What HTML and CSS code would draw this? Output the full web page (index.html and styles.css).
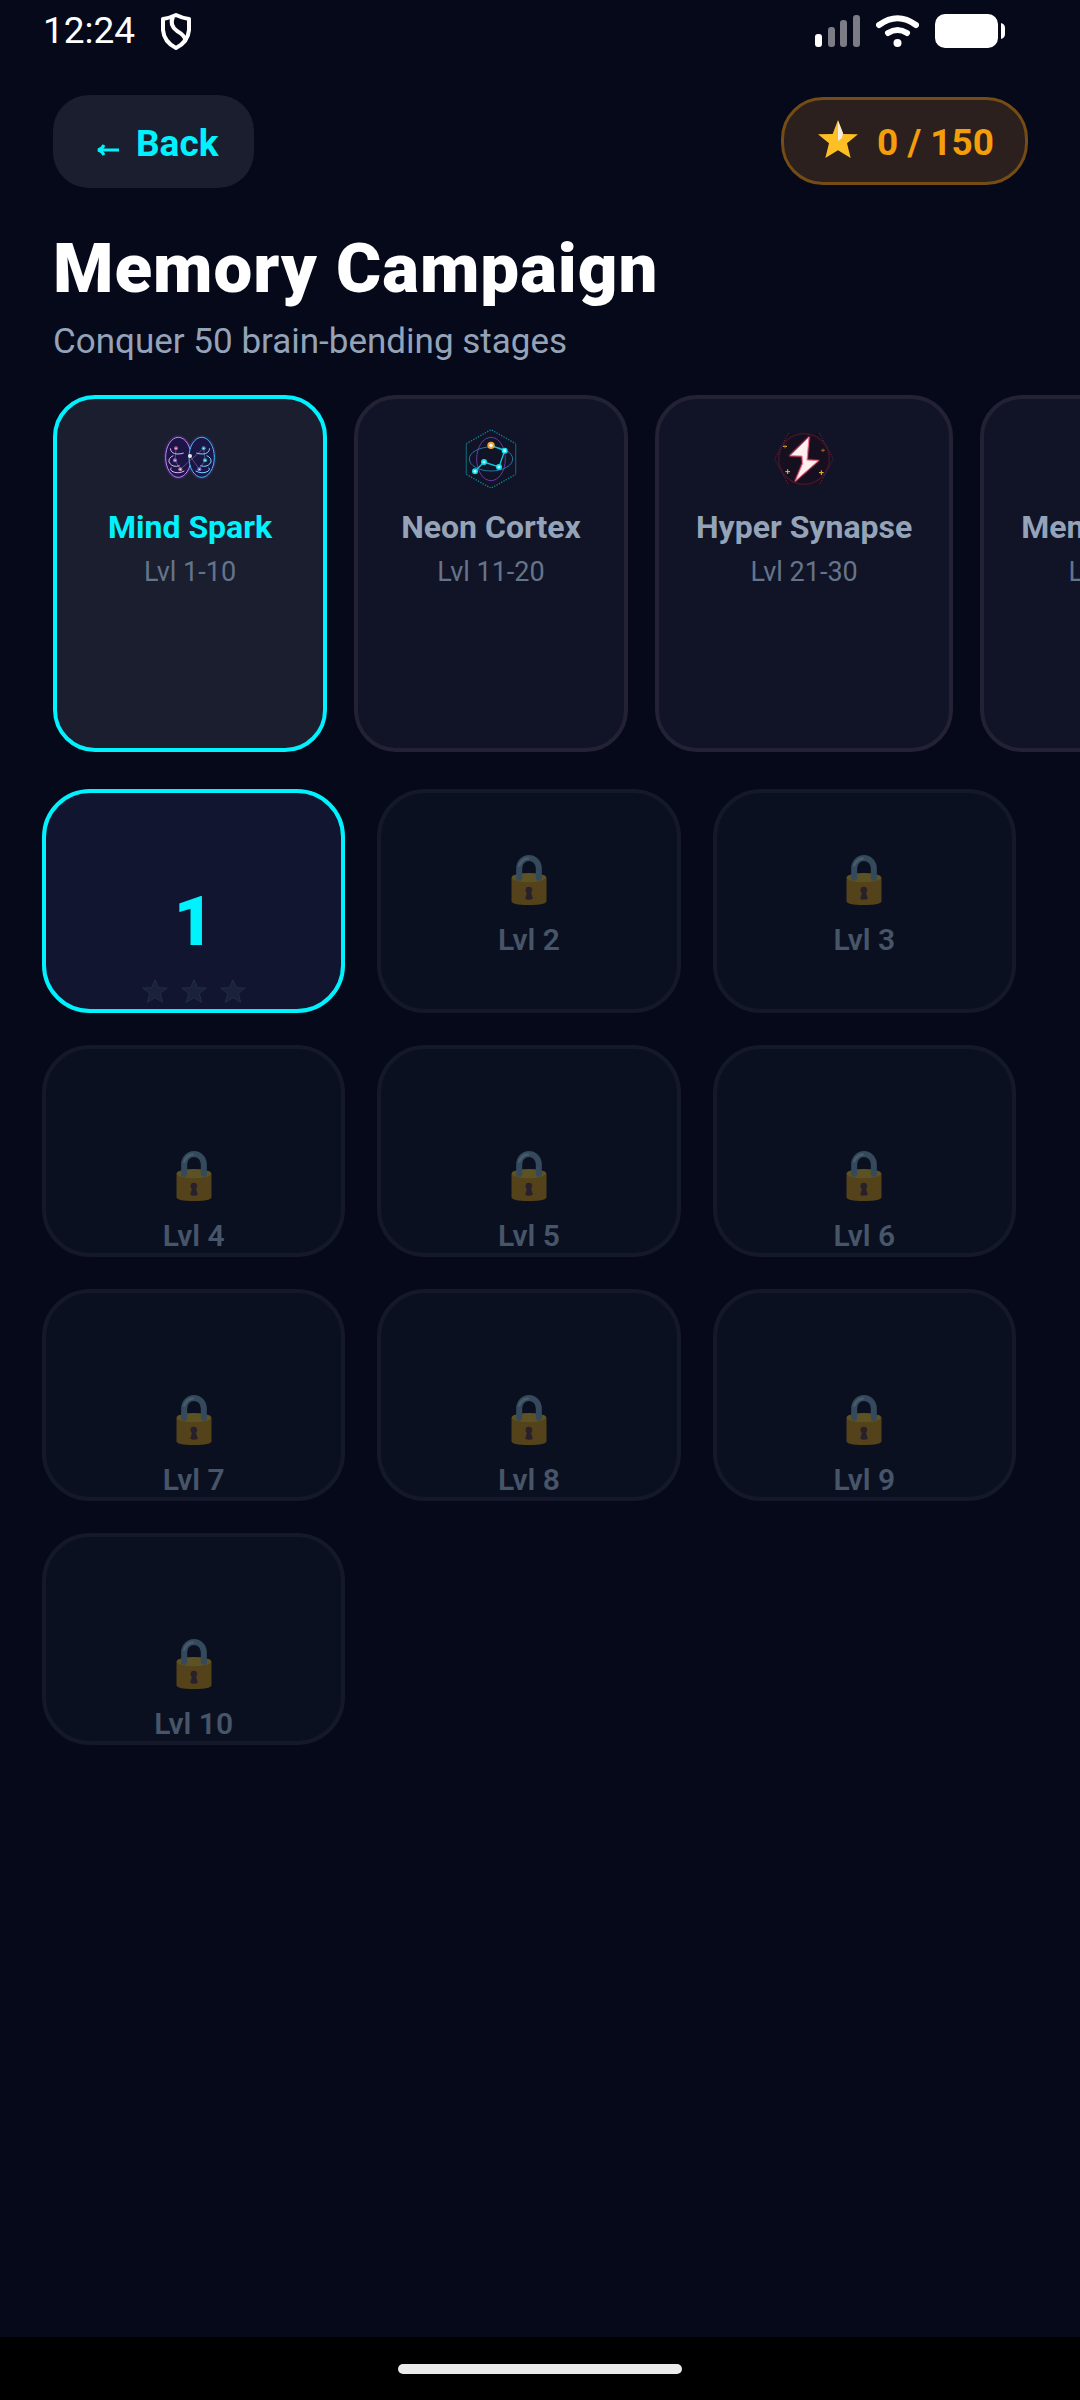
FILE: index.html
```html
<!DOCTYPE html>
<html lang="en">
<head>
    <meta charset="UTF-8">
    <meta name="viewport" content="width=device-width, initial-scale=1.0">
    <title>Memory Campaign</title>
    <link rel="stylesheet" href="styles.css">
</head>
<body>

    <!-- shared shapes -->
    <svg class="sprite" aria-hidden="true">
        <symbol id="lock" viewBox="0 0 107 150">
            <path d="M1 70 Q1 62 10 60 H97 Q106 62 106 70 V138 Q106 150 53 150 Q1 150 1 138 Z" fill="#54421b"/>
            <ellipse cx="53" cy="68" rx="51" ry="14" fill="#5c5224"/>
            <path d="M24 68 V40 A29.5 31 0 0 1 83 40 V68" fill="none" stroke="#34495b" stroke-width="18" stroke-linecap="round"/>
            <path d="M24 32 Q31 12 50 10" fill="none" stroke="#465d6c" stroke-width="7" stroke-linecap="round"/>
            <circle cx="53" cy="105" r="10" fill="#28202a"/>
            <path d="M49 108 H58 L65 131 Q53 137 42 131 Z" fill="#28202a"/>
        </symbol>
        <symbol id="star" viewBox="0 0 78 72">
            <path d="M39 2 L49 26 L76 27 L55 43 L62 70 L39 56 L16 70 L23 43 L2 27 L29 26 Z"/>
        </symbol>
    </svg>

    <header class="status-bar">
        <div class="status-left">
            <span>12:24</span>
            <svg width="32" height="38" viewBox="0 0 32 38" fill="none" stroke="#fff" stroke-width="4" stroke-linejoin="round">
                <path d="M16 3 Q22 6 29 7 V18 Q28 30 16 36 Q4 30 3 18 V7 Q10 6 16 3 Z"/>
                <path d="M13 5 Q9 13 17 19 Q26 24 25 29"/>
            </svg>
        </div>
        <div class="status-right">
            <svg width="45" height="32" viewBox="0 0 45 32">
                <rect x="0" y="19" width="7" height="13" rx="3" fill="#fff"/>
                <rect x="13" y="12" width="7" height="20" rx="3" fill="#7c7c87"/>
                <rect x="25" y="5" width="7" height="27" rx="3" fill="#7c7c87"/>
                <rect x="38" y="0" width="7" height="32" rx="3" fill="#7c7c87"/>
            </svg>
            <svg width="43" height="32" viewBox="0 0 43 32" fill="none" stroke="#fff" stroke-width="6" stroke-linecap="round">
                <path d="M3 10 Q21.500 -3.500 40 10"/>
                <path d="M12 18 Q21.500 12 31 18"/>
                <circle cx="21.500" cy="28" r="4" fill="#fff" stroke="none"/>
            </svg>
            <svg width="70" height="34" viewBox="0 0 70 34" fill="#fff">
                <rect width="63" height="34" rx="10"/>
                <path d="M66 9 Q70 10 70 14 V20 Q70 24 66 25 Z"/>
            </svg>
        </div>
    </header>

    <main>
        <div class="top-bar">
            <button class="back">
                <svg width="24" height="12" viewBox="0 0 24 12" fill="none" stroke="#00f2ff" stroke-width="3" aria-hidden="true">
                    <path d="M23 6 H3"/>
                    <path d="M8 1 Q6 5 2 6 Q6 7 8 11"/>
                </svg>
                Back
            </button>
            <div class="star-count">
                <svg width="40" height="38" viewBox="0 0 120 114">
                    <path d="M60 0 L76 42 L120 43 L87 70 L98 114 L60 91 L22 114 L33 70 L0 43 L44 42 Z" fill="#fdbf24"/>
                    <path d="M60 3 L75 40 L72 54 L60 63 Z" fill="#f3eee3"/>
                </svg>
                <span>0 / 150</span>
            </div>
        </div>

        <h1>Memory Campaign</h1>
        <p class="subtitle">Conquer 50 brain-bending stages</p>

        <nav class="stages">
            <button class="stage active">
                <svg width="60" height="60" viewBox="63 39 180 180" fill="none">
                    <ellipse cx="118" cy="127" rx="39" ry="61" stroke="#6d3aa3" stroke-width="10" opacity="0.3"/>
                    <ellipse cx="188" cy="127" rx="39" ry="61" stroke="#5a3aa3" stroke-width="10" opacity="0.3"/>
                    <ellipse cx="118" cy="127" rx="38" ry="60" fill="#1c1546" stroke="#c084fc" stroke-width="3"/>
                    <ellipse cx="188" cy="127" rx="38" ry="60" fill="#1a1747" stroke="#38bdf8" stroke-width="3"/>
                    <g stroke="#d8b4fe" stroke-width="3">
                        <path d="M94 100 Q96 116 114 117 Q128 117 134 114"/>
                        <path d="M103 122 Q88 128 90 141 Q96 154 112 154 L122 152"/>
                        <path d="M97 158 Q91 162 99 169 Q117 178 136 168"/>
                    </g>
                    <g stroke="#7dd3fc" stroke-width="3">
                        <path d="M212 100 Q210 116 192 117 Q178 117 172 114"/>
                        <path d="M203 122 Q218 128 216 141 Q210 154 194 154 L184 152"/>
                        <path d="M209 158 Q215 162 207 169 Q189 178 170 168"/>
                    </g>
                    <path d="M111 100 L108 136 L124 163 L194 100 L198 136 L181 163 L153 123" stroke="#a6a3b5" stroke-width="2" opacity="0.6"/>
                    <circle cx="111" cy="100" r="6" fill="#c4578d"/>
                    <circle cx="108" cy="136" r="6" fill="#a062d0"/>
                    <circle cx="124" cy="163" r="6" fill="#c47890"/>
                    <circle cx="153" cy="123" r="6" fill="#e8e6ea"/>
                    <circle cx="194" cy="100" r="6" fill="#3c9fce"/>
                    <circle cx="198" cy="136" r="6" fill="#21bcc5"/>
                    <circle cx="181" cy="163" r="6" fill="#7776d8"/>
                    <g fill="#fff">
                        <circle cx="111" cy="100" r="2"/>
                        <circle cx="108" cy="136" r="2"/>
                        <circle cx="124" cy="163" r="2"/>
                        <circle cx="194" cy="100" r="2"/>
                        <circle cx="198" cy="136" r="2"/>
                        <circle cx="181" cy="163" r="2"/>
                    </g>
                </svg>
                <span class="stage-name">Mind Spark</span>
                <span class="stage-range">Lvl 1-10</span>
            </button>

            <button class="stage">
                <svg width="60" height="60" viewBox="66 39 180 180" fill="none">
                    <path d="M82 88 V176 M230 88 V176" stroke="#0d5665" stroke-width="4"/>
                    <path d="M82 86 L156 44 L230 86 M82 178 L156 220 L230 178" stroke="#138292" stroke-width="4" stroke-dasharray="4 4"/>
                    <ellipse cx="156" cy="132" rx="43" ry="65" stroke="#6739a4" stroke-width="3"/>
                    <ellipse cx="156" cy="132" rx="65" ry="36" stroke="#2674a7" stroke-width="3"/>
                    <path d="M156 91 L197 107 L180 156 L135 141 L108 169" stroke="#06cfe0" stroke-width="4"/>
                    <circle cx="156" cy="91" r="11" fill="#f5a33a"/>
                    <circle cx="156" cy="91" r="5" fill="#fff"/>
                    <g fill="#12e0ee">
                        <circle cx="197" cy="107" r="9"/>
                        <circle cx="180" cy="156" r="9"/>
                        <circle cx="135" cy="141" r="9"/>
                        <circle cx="108" cy="169" r="9"/>
                    </g>
                    <g fill="#c4fbff">
                        <circle cx="197" cy="107" r="5"/>
                        <circle cx="180" cy="156" r="4"/>
                        <circle cx="135" cy="141" r="4"/>
                        <circle cx="108" cy="169" r="4"/>
                    </g>
                </svg>
                <span class="stage-name">Neon Cortex</span>
                <span class="stage-range">Lvl 11-20</span>
            </button>

            <button class="stage">
                <svg width="60" height="60" viewBox="60 39 180 180" fill="none">
                    <path d="M104 54 H196 L238 132 L196 210 H104 L62 132 Z" fill="#180d1e" opacity="0.7"/>
                    <path d="M104 54 L62 132 L104 210 M196 54 L238 132 L196 210" stroke="#8c2640" stroke-width="3" stroke-dasharray="3 5"/>
                    <circle cx="150" cy="132" r="76" stroke="#3b1629" stroke-width="5"/>
                    <path d="M165 66 L108 122 L144 123 L146 145 L124 198 L193 137 L159 135 Z" fill="#fff1f2" stroke="#6b1c34" stroke-width="9" stroke-linejoin="round"/>
                    <path d="M165 66 L108 122 L144 123 L146 145 L124 198 L193 137 L159 135 Z" fill="#fff1f2" stroke="#f0788c" stroke-width="3"/>
                    <path d="M94 170 H108 M101 163 V177 M195 173 H209 M202 166 V180 M87 94 H99" stroke="#fbbf24" stroke-width="3"/>
                    <path d="M201 106 H213 M207 101 V111 M93 90 V100" stroke="#946a20" stroke-width="3"/>
                </svg>
                <span class="stage-name">Hyper Synapse</span>
                <span class="stage-range">Lvl 21-30</span>
            </button>

            <button class="stage">
                <svg width="60" height="60" viewBox="0 0 180 180" fill="none">
                    <circle cx="90" cy="90" r="70" stroke="#6739a4" stroke-width="4"/>
                    <circle cx="90" cy="90" r="36" stroke="#2674a7" stroke-width="4"/>
                </svg>
                <span class="stage-name">Memory Vault</span>
                <span class="stage-range">Lvl 31-40</span>
            </button>
        </nav>

        <section class="levels">
            <button class="level current">
                <span class="number">1</span>
                <span class="stars">
                    <svg><use href="#star"/></svg>
                    <svg><use href="#star"/></svg>
                    <svg><use href="#star"/></svg>
                </span>
            </button>
            <button class="level first-row" disabled><svg class="lock"><use href="#lock"/></svg>Lvl 2</button>
            <button class="level first-row" disabled><svg class="lock"><use href="#lock"/></svg>Lvl 3</button>
            <button class="level" disabled><svg class="lock"><use href="#lock"/></svg>Lvl 4</button>
            <button class="level" disabled><svg class="lock"><use href="#lock"/></svg>Lvl 5</button>
            <button class="level" disabled><svg class="lock"><use href="#lock"/></svg>Lvl 6</button>
            <button class="level" disabled><svg class="lock"><use href="#lock"/></svg>Lvl 7</button>
            <button class="level" disabled><svg class="lock"><use href="#lock"/></svg>Lvl 8</button>
            <button class="level" disabled><svg class="lock"><use href="#lock"/></svg>Lvl 9</button>
            <button class="level" disabled><svg class="lock"><use href="#lock"/></svg>Lvl 10</button>
        </section>
    </main>

    <footer class="home-bar">
        <div class="home-pill"></div>
    </footer>

</body>
</html>
```
FILE: styles.css
```css
* {
    box-sizing: border-box;
}

body {
    font-family: Roboto, "Liberation Sans", sans-serif;
    background-color: #05091a;
    color: #fff;
    margin: 0;
    min-height: 100vh;
    display: flex;
    flex-direction: column;
    overflow-x: hidden;
}

button {
    font-family: inherit;
    margin: 0;
    cursor: pointer;
}

svg {
    flex-shrink: 0;
}

.sprite {
    position: absolute;
    width: 0;
    height: 0;
}

/* status bar */
.status-bar {
    display: flex;
    justify-content: space-between;
    align-items: center;
    height: 60px;
    padding: 2px 75px 0 43px;
    font-size: 37px;
    line-height: 44px;
}

.status-left {
    display: flex;
    align-items: center;
    gap: 25px;
}

.status-right {
    display: flex;
    align-items: center;
    gap: 16px;
}

main {
    flex: 1;
}

/* back button and star counter */
.top-bar {
    display: flex;
    justify-content: space-between;
    align-items: flex-start;
    padding: 35px 52px 0 53px;
}

.back {
    display: flex;
    align-items: center;
    gap: 16px;
    height: 93px;
    padding: 3px 36px 0 43px;
    border: none;
    border-radius: 36px;
    background-color: #1b1e2f;
    color: #00f2ff;
    font-size: 37px;
    font-weight: bold;
}

.back svg {
    margin-top: 14px;
}

.star-count {
    display: flex;
    align-items: center;
    gap: 19px;
    height: 88px;
    margin-top: 2px;
    padding: 0 31px 0 34px;
    border: 3px solid #754c14;
    border-radius: 42px;
    background-color: #2b201e;
    color: #f59e0b;
    font-size: 37px;
    font-weight: bold;
}

.star-count svg {
    margin-bottom: 4px;
}

.star-count span {
    padding-top: 2px;
}

h1 {
    margin: 41px 53px 0;
    font-size: 69px;
    line-height: 80px;
    font-weight: 900;
    letter-spacing: 1px;
}

.subtitle {
    margin: 12px 53px 0;
    color: #94a3b8;
    font-size: 35px;
    line-height: 42px;
}

/* stage picker, scrolls sideways */
.stages {
    display: flex;
    gap: 27px;
    margin-top: 32px;
    padding: 0 53px;
    overflow-x: auto;
    scrollbar-width: none;
}

.stage {
    display: flex;
    flex-direction: column;
    align-items: center;
    justify-content: flex-start;
    flex-shrink: 0;
    min-width: 274px;
    height: 357px;
    padding: 29px 37px;
    border: 4px solid #222234;
    border-radius: 42px;
    background-color: #111426;
}

.stage-name {
    margin-top: 20px;
    color: #94a3b8;
    font-size: 32px;
    line-height: 38px;
    font-weight: bold;
}

.stage-range {
    margin-top: 10px;
    color: #64748b;
    font-size: 27px;
    line-height: 32px;
}

.stage.active {
    border-color: #00f2ff;
    background-color: #1b1e2f;
}

.stage.active .stage-name {
    color: #00f2ff;
}

/* level grid */
.levels {
    display: grid;
    grid-template-columns: repeat(3, 1fr);
    gap: 32px;
    padding: 37px 64px 48px 42px;
}

.level {
    display: flex;
    flex-direction: column;
    align-items: center;
    justify-content: flex-start;
    min-height: 212px;
    padding: 102px 0 0;
    border: 4px solid #15182a;
    border-radius: 48px;
    background-color: #0b1021;
    color: #475569;
    font-size: 30px;
    line-height: 34px;
    font-weight: 600;
}

.level.first-row {
    padding-top: 62px;
}

.level.current {
    min-height: 224px;
    padding-top: 89px;
    border-color: #00f2ff;
    background-color: #111530;
}

.number {
    color: #00f2ff;
    font-size: 69px;
    line-height: 80px;
    font-weight: 900;
}

.stars {
    display: flex;
    gap: 13px;
    margin-top: 17px;
}

.stars svg {
    width: 26px;
    height: 24px;
    fill: #1a213b;
    stroke: #2c3550;
    stroke-width: 2px;
}

.lock {
    width: 36px;
    height: 50px;
    margin-bottom: 18px;
}

/* system navigation */
.home-bar {
    display: flex;
    justify-content: center;
    height: 63px;
    padding-top: 27px;
    background-color: #000;
}

.home-pill {
    width: 284px;
    height: 10px;
    border-radius: 5px;
    background-color: #ebebeb;
}
```
